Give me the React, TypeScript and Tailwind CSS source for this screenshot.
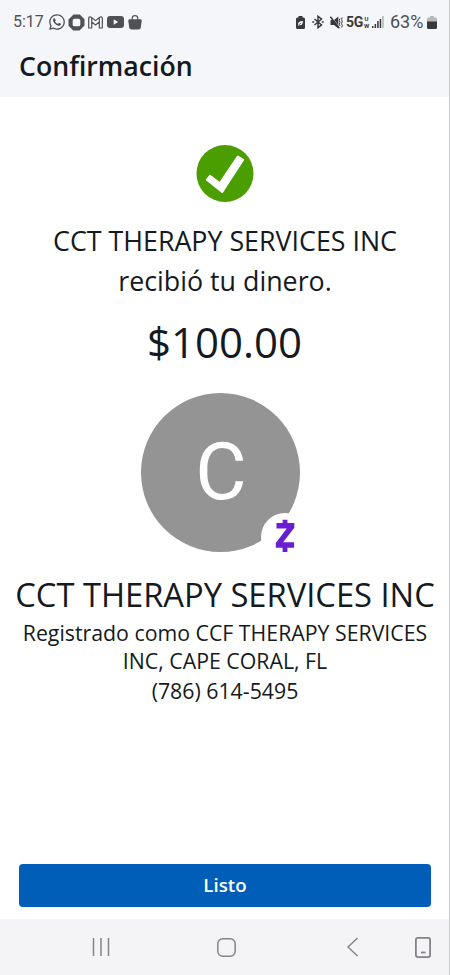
import { FaWhatsapp } from "react-icons/fa";

function StatusIcons() {
  return (
    <div className="flex items-center text-[#505155]">
      <FaWhatsapp className="ml-[5px] h-[18px] w-[18px]" />
      <svg className="ml-[2px] h-[17px] w-[17px]" viewBox="0 0 17 17">
        <path
          fill="currentColor"
          fillRule="evenodd"
          d="M5.500.500h6.300L16.500 5.200v6.300L11.500 16.500H5.200L.5 11.800V5.500zM6.300 4.700Q4.700 4.700 4.700 6.300v4.400Q4.700 12.300 6.300 12.300h4.400Q12.300 12.300 12.300 10.700V6.300Q12.300 4.700 10.700 4.700z"
        />
      </svg>
      <svg className="ml-[3px] h-[13px] w-[15px]" viewBox="0 0 15 13" fill="none" stroke="currentColor" strokeWidth="1.200" strokeLinejoin="round">
        <path d="M.7 2.300C.7.600 2.300.4 3.200 1.200L7.500 4.600l4.300-3.400c.9-.8 2.500-.6 2.500 1.100V12h-3V6L7.500 8.900 3.700 6v6h-3zM3.700 6V1.700M11.300 6V1.700" />
      </svg>
      <svg className="ml-[4px] h-[12px] w-[17px]" viewBox="0 0 17 12">
        <rect width="17" height="12" rx="3" fill="currentColor" />
        <path d="M6.700 3.300v5.400L11.200 6z" fill="#f4f6f9" />
      </svg>
      <svg className="ml-[4px] h-[15px] w-[14px]" viewBox="0 0 14 15">
        <path d="M1.500 4.300h11Q13.900 4.300 13.700 5.800l-.9 6.700Q12.500 14.600 10.500 14.600h-7Q1.500 14.600 1.200 12.500L.3 5.800Q.1 4.300 1.500 4.300z" fill="currentColor" />
        <path d="M4.200 5V3.400a2.800 2.800 0 0 1 5.600 0V5" fill="none" stroke="currentColor" strokeWidth="1.200" />
      </svg>
    </div>
  );
}

function SystemIcons() {
  return (
    <div className="flex items-center text-[#38393d]">
      <svg className="h-[13px] w-[9px]" viewBox="0 0 9 13">
        <path d="M2.500 0h4v1.500h1Q9 1.500 9 3v8.500Q9 13 7.500 13h-6Q0 13 0 11.500V3q0-1.500 1.500-1.500h1z" fill="currentColor" />
        <path d="M2 8.200C2 5.700 4 5 7 5c0 3-1.300 4.500-3.700 4.200L2 10.300" fill="#f4f6f9" />
        <path d="M2.200 9.500 5 7" stroke="currentColor" strokeWidth=".7" />
      </svg>
      <svg className="ml-[7px] h-[14px] w-[12px]" viewBox="0 0 12 14" fill="none" stroke="currentColor" strokeWidth="1.500">
        <path d="m2.500 4 7 6L6 12.700V1.300L9.500 4l-7 6" />
        <path d="M.3 7h1.900M9.800 7h1.900" strokeWidth="1.700" />
      </svg>
      <svg className="ml-[6px] h-[13px] w-[13px]" viewBox="0 0 13 13">
        <path d="M.5 4H4l4.300-3.500v12L4 9H.5z" fill="currentColor" />
        <path d="m1.300.500 8.500 11" stroke="#f4f6f9" strokeWidth=".7" />
        <path d="m.4.800 9 11.500" stroke="currentColor" strokeWidth="1.400" />
        <path d="m10 2.500-.8 1.800.8 1.900-.8 2L10 10M12.300 1.500l-.8 2 .8 2-.8 2 .8 2-.6 2" fill="none" stroke="currentColor" strokeWidth="1" />
      </svg>
      <span className="ml-[3px] w-[17px] font-['Roboto',sans-serif] text-[14px] leading-[14px] font-bold tracking-[-0.3px]">5G</span>
      <span className="flex w-[7px] flex-col items-center font-['Roboto',sans-serif] text-[6px] leading-[7px] font-bold">
        <span>U</span>
        <span>W</span>
      </span>
      <svg className="ml-[2px] h-[12px] w-[12px]" viewBox="0 0 12 12" fill="currentColor">
        <path d="M0 10h1.500v2H0zM2.600 8h1.500v4H2.600zM5.200 5h1.500v7H5.200zM7.700 3h1.500v9H7.700z" />
        <path d="M10.200 0h1.500v12h-1.500z" opacity=".35" />
      </svg>
      <span className="ml-[6px] w-[36px] font-['Roboto',sans-serif] text-[18px] leading-[20px] text-[#505155]">63%</span>
      <svg className="ml-[1px] h-[13px] w-[10px]" viewBox="0 0 10 13">
        <path d="M3 0h4v1.500h1.500Q10 1.500 10 3v3H0V3q0-1.500 1.500-1.500H3z" fill="#b7b8bb" />
        <path d="M0 5.500h10v6Q10 13 8.500 13h-7Q0 13 0 11.500z" fill="currentColor" />
      </svg>
    </div>
  );
}

function Avatar() {
  return (
    <div className="relative mt-[26px] ml-[141px] h-[159px] w-[159px] rounded-full bg-[#949494]">
      <div className="flex h-full items-center justify-center pl-[1px] font-['Roboto',sans-serif] text-[79px] leading-none text-white">
        C
      </div>
      <div className="absolute top-[120px] left-[120px] flex h-[48px] w-[48px] items-start justify-center rounded-full bg-white pt-[6px]">
        <svg className="h-[34px] w-[20px]" viewBox="0 0 20 34" fill="#6a1ed2">
          <path d="M1.500 4h17.800v4.800L8.100 23.200h11v5.600H.8V24L11.800 9.600H1.500z" />
          <path d="M7.600.8h4.800v4H7.600zM7.600 28h4.800v5H7.600z" />
        </svg>
      </div>
    </div>
  );
}

export default function App() {
  return (
    <div className="flex h-[975px] w-[450px] flex-col overflow-hidden border-r border-[#c9cacc] bg-white font-['Open_Sans',sans-serif] text-[#141a20]">
      <header className="h-[97px] shrink-0 bg-[#f4f6f9]">
        <div className="flex h-[44px] items-center justify-between pr-[12px] pl-[13px]">
          <div className="flex items-center">
            <span className="w-[30px] font-['Roboto',sans-serif] text-[16px] leading-[20px] text-[#505155]">5:17</span>
            <StatusIcons />
          </div>
          <SystemIcons />
        </div>
        <h1 className="pl-[19px] text-[26.700px] leading-[44px] font-semibold">Confirmación</h1>
      </header>

      <main className="flex-1 whitespace-nowrap text-center">
        <svg className="mt-[48px] ml-[196px] block h-[58px] w-[58px]" viewBox="0 0 58 58">
          <circle cx="29" cy="28.500" r="28.500" fill="#4b9e00" />
          <path d="m10.800 34.800 3.200-4 9.800 7.500L41.800 11.500l5.400 3.300L26.200 47z" fill="white" stroke="white" strokeWidth="2" strokeLinejoin="round" />
        </svg>
        <p className="mt-[18px] pl-[1px] text-[26.800px] leading-[40px]">
          CCT THERAPY SERVICES INC
          <br />
          recibió tu dinero.
        </p>
        <p className="mt-[16px] text-[42px] leading-[50px]">$100.00</p>
        <Avatar />
        <h2 className="mt-[18px] pl-[1px] text-[32.700px] leading-[50px]">CCT THERAPY SERVICES INC</h2>
        <p className="mt-[-1px] pl-[1px] text-[21.300px] leading-[28px]">
          Registrado como CCF THERAPY SERVICES
          <br />
          INC, CAPE CORAL, FL
        </p>
        <p className="mt-[1px] pl-[1px] text-[21.300px] leading-[30px]">(786) 614-5495</p>
      </main>

      <div className="flex h-[55px] shrink-0 pr-[18px] pb-[12px] pl-[19px]">
        <button className="flex-1 rounded-[4px] bg-[#005eb8] pb-[2px] text-[18.700px] leading-[24px] font-semibold text-white">Listo</button>
      </div>

      <nav className="flex h-[56px] shrink-0 items-center bg-[#f4f4f7] text-[#838388]">
        <svg className="ml-[92px] h-[20px] w-[18px]" viewBox="0 0 18 20" stroke="currentColor" strokeWidth="1.500">
          <path d="M1.500 1v18M9 1v18M16.500 1v18" />
        </svg>
        <svg className="ml-[107px] h-[19px] w-[19px]" viewBox="0 0 19 19" fill="none" stroke="currentColor" strokeWidth="1.500">
          <rect x=".8" y=".8" width="17.400" height="17.400" rx="5" />
        </svg>
        <svg className="ml-[111px] h-[20px] w-[12px]" viewBox="0 0 12 20" fill="none" stroke="currentColor" strokeWidth="1.400">
          <path d="M10.500 1 1 10l9.500 9" />
        </svg>
        <svg className="ml-[56px] h-[21px] w-[16px]" viewBox="0 0 16 21" fill="none" stroke="currentColor" strokeWidth="1.800">
          <rect x=".9" y=".9" width="14.200" height="19.200" rx="2" />
          <path d="M6 15.500h4.500" />
        </svg>
      </nav>
    </div>
  );
}
